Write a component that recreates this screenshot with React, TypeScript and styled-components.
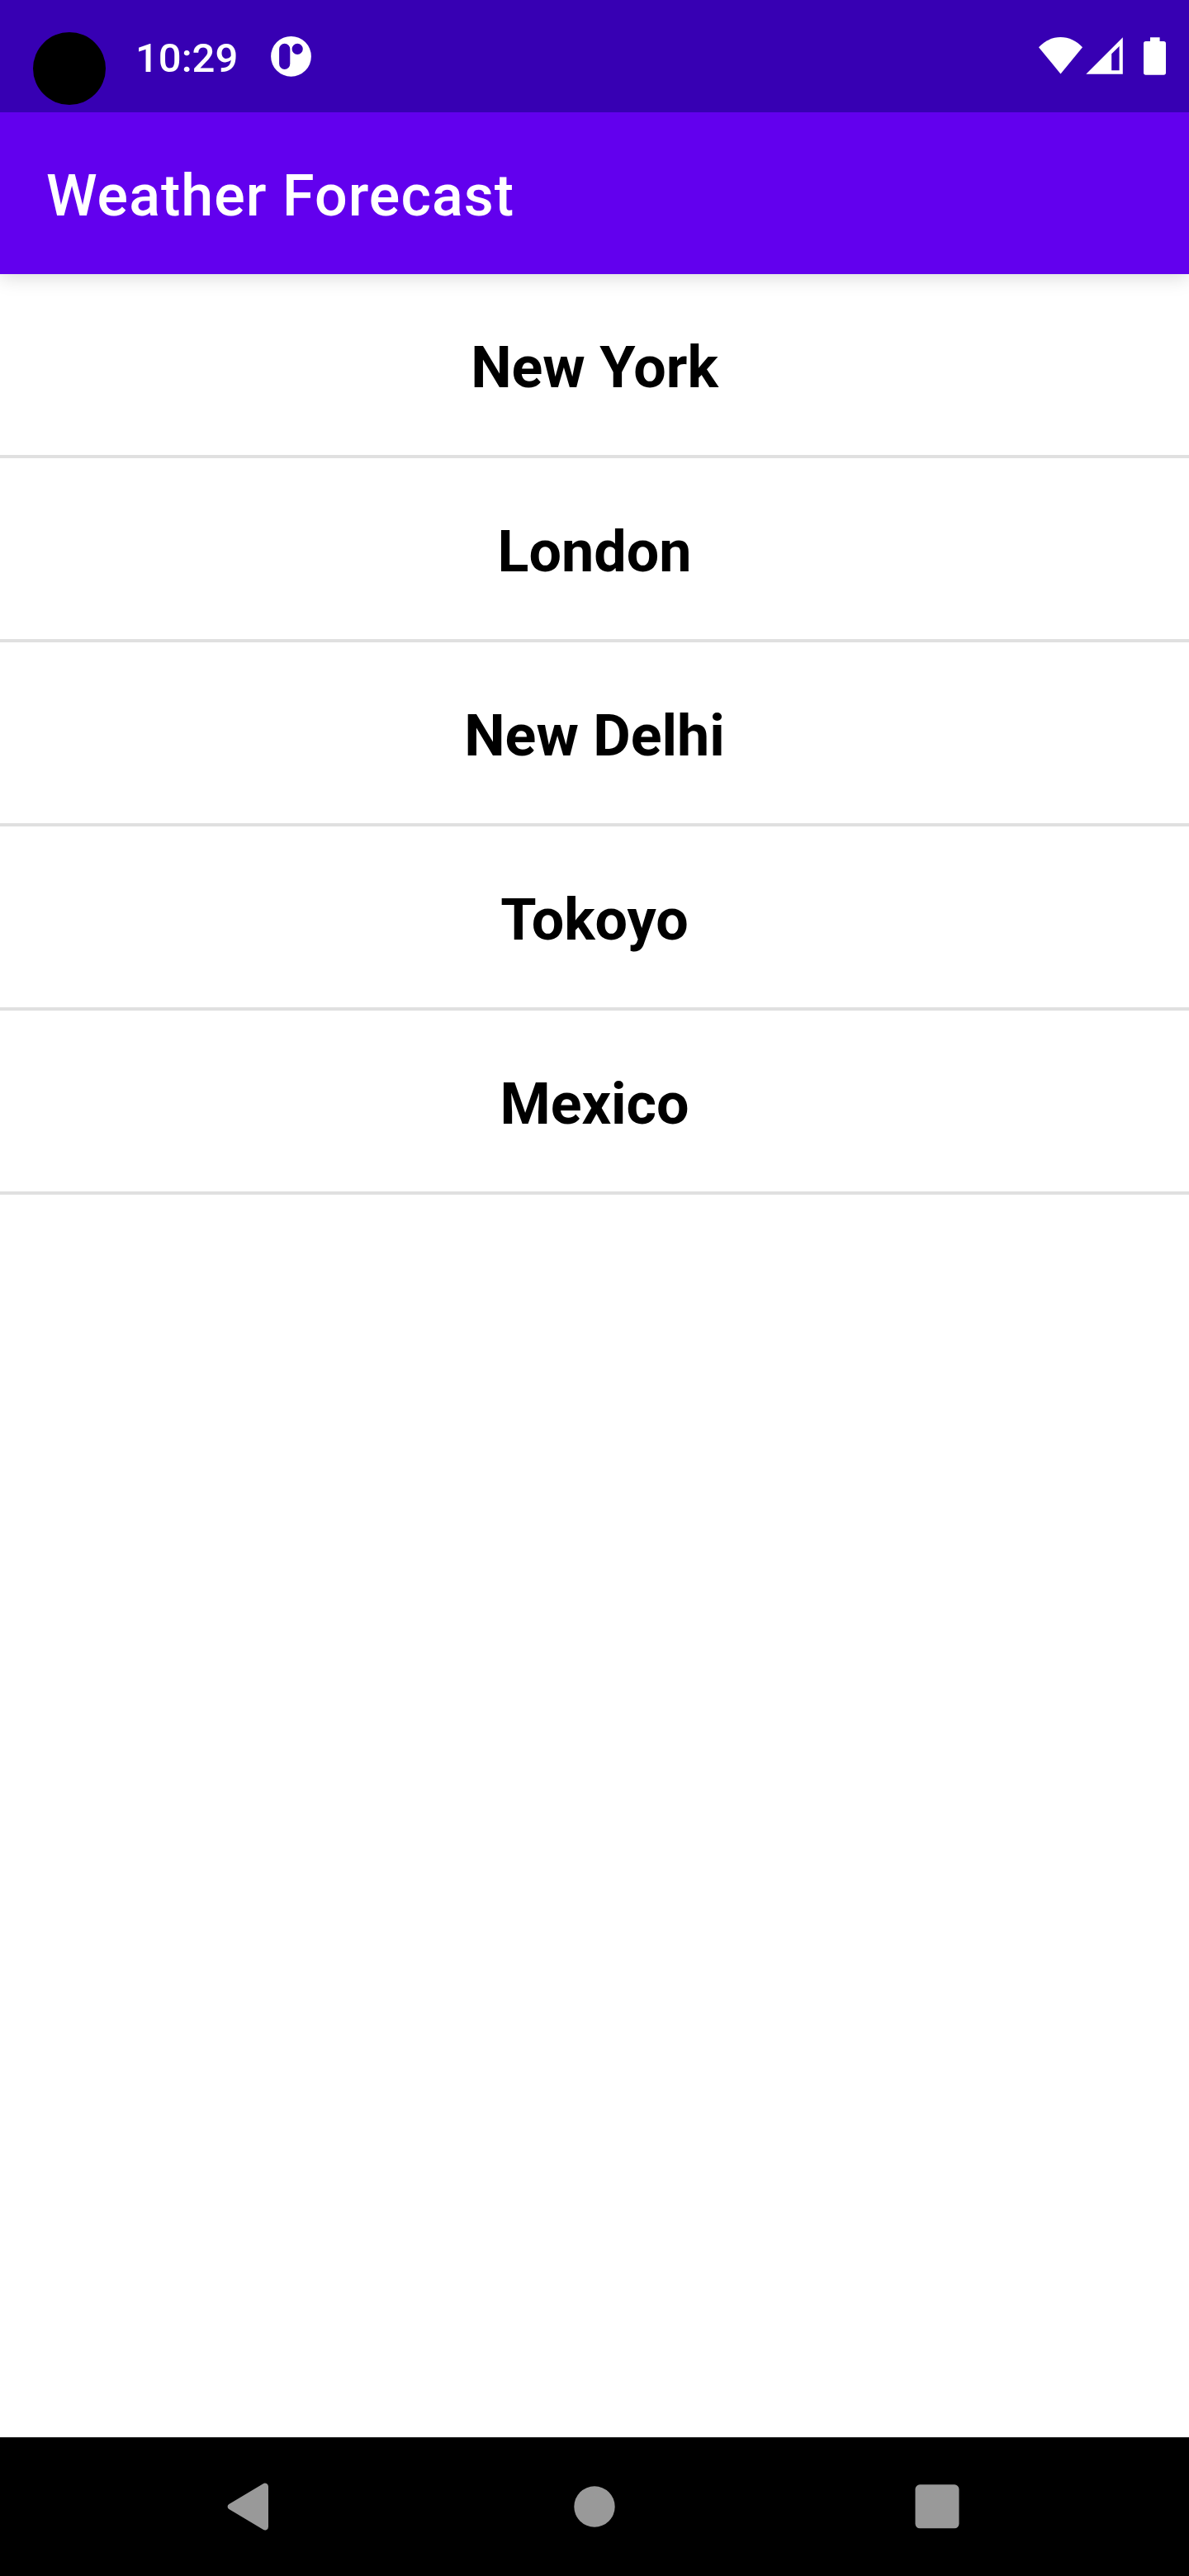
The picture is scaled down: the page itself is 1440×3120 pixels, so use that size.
import React from "react";
import styled, { createGlobalStyle } from "styled-components";

const GlobalStyle = createGlobalStyle`
  html, body { margin: 0; padding: 0; background: #ffffff; }
  *, *::before, *::after { box-sizing: border-box; }
`;

const Screen = styled.div`
  display: flex;
  flex-direction: column;
  width: 1440px;
  height: 3120px;
  overflow: hidden;
  background: #ffffff;
  font-family: Roboto, "Noto Sans", sans-serif;
`;

const StatusBar = styled.header`
  display: flex;
  justify-content: space-between;
  flex: none;
  z-index: 2;
  height: 136px;
  padding-left: 40px;
  background: #3700b3;
  color: #ffffff;
`;

const StatusGroup = styled.div`
  display: flex;
  align-items: flex-start;
`;

const CameraCutout = styled.div`
  width: 88px;
  height: 88px;
  margin-top: 39px;
  border-radius: 50%;
  background: #000000;
`;

const Clock = styled.time`
  width: 124px;
  margin: 41px 40px 0 36px;
  font-size: 49px;
  font-weight: 500;
  line-height: 59px;
  white-space: nowrap;
`;

const StatusIcon = styled.svg`
  display: block;
  flex: none;
  height: 136px;
  fill: #ffffff;
`;

const AppBar = styled.div`
  display: flex;
  align-items: center;
  flex: none;
  z-index: 1;
  height: 196px;
  padding: 6px 56px 0;
  background: #6200ee;
  box-shadow: 0 4px 22px rgba(0, 0, 0, 0.15);
`;

const Title = styled.h1`
  margin: 0;
  color: #ffffff;
  font-size: 70px;
  font-weight: 500;
  line-height: 82px;
  letter-spacing: 1.05px;
  white-space: nowrap;
`;

const CityList = styled.ul`
  flex: 1;
  margin: 0;
  padding: 0;
  list-style: none;
`;

const CityRow = styled.li`
  height: 223px;
  padding-top: 72px;
  border-bottom: 4px solid #e0e0e0;
  color: #000000;
  font-size: 70px;
  font-weight: 700;
  line-height: 82px;
  text-align: center;
`;

const NavigationBar = styled.nav`
  display: flex;
  align-items: center;
  justify-content: center;
  flex: none;
  gap: 318px;
  height: 168px;
  background: #000000;
`;

const NavButton = styled.button`
  display: block;
  width: 98px;
  height: 98px;
  padding: 0;
  border: 0;
  background: none;

  svg {
    display: block;
    fill: #999999;
  }
`;

const cities = ["New York", "London", "New Delhi", "Tokoyo", "Mexico"];

export default function App() {
  return (
    <>
      <GlobalStyle />
      <Screen>
        <StatusBar>
          <StatusGroup>
            <CameraCutout />
            <Clock>10:29</Clock>
            <StatusIcon width="50" viewBox="328 0 50 136">
              <path
                fillRule="evenodd"
                d="M352.5 43.9a24.4 24.4 0 1 1 0 48.8a24.4 24.4 0 1 1 0-48.8zM344.7 52.7a6.6 6.6 0 0 0-6.6 6.6v18a6.6 6.6 0 0 0 13.2 0v-18a6.6 6.6 0 0 0-6.6-6.6zM360.2 52.7a6.6 6.6 0 1 0 0 13.2a6.6 6.6 0 1 0 0-13.2z"
              />
            </StatusIcon>
          </StatusGroup>
          <StatusGroup>
            <StatusIcon width="57" viewBox="1257 0 57 136">
              <path d="M1284.5 89.5L1258 57.2C1265.3 49.4 1274.5 45 1284.5 45S1303.7 49.4 1311 57.2Z" />
            </StatusIcon>
            <StatusIcon width="70" viewBox="1314 0 70 136">
              <path
                fillRule="evenodd"
                d="M1315.3 89.7L1359.8 45.2V89.7ZM1346.2 65.3V85.3H1355.6V56Z"
              />
            </StatusIcon>
            <StatusIcon width="56" viewBox="1384 0 56 136">
              <path d="M1393 45.3H1404.6V50H1409.3A2.7 2.7 0 0 1 1412 52.7V88A2.7 2.7 0 0 1 1409.3 90.7H1387.7A2.7 2.7 0 0 1 1385 88V52.7A2.7 2.7 0 0 1 1387.7 50H1393Z" />
            </StatusIcon>
          </StatusGroup>
        </StatusBar>
        <AppBar>
          <Title>Weather Forecast</Title>
        </AppBar>
        <CityList>
          {cities.map((city) => (
            <CityRow key={city}>{city}</CityRow>
          ))}
        </CityList>
        <NavigationBar>
          <NavButton aria-label="Back">
            <svg width="98" height="98" viewBox="255 2987 98 98">
              <path d="M277.3 3033L318.7 3008.3A4 4 0 0 1 325 3011.7V3060.3A4 4 0 0 1 318.7 3063.7L277.3 3039A3.5 3.5 0 0 1 277.3 3033Z" />
            </svg>
          </NavButton>
          <NavButton aria-label="Home">
            <svg width="98" height="98" viewBox="0 0 98 98">
              <circle cx="49" cy="49" r="24.7" />
            </svg>
          </NavButton>
          <NavButton aria-label="Recent apps">
            <svg width="98" height="98" viewBox="1087 2987 98 98">
              <rect x="1108.5" y="3009.3" width="53" height="53" rx="5.5" />
            </svg>
          </NavButton>
        </NavigationBar>
      </Screen>
    </>
  );
}
